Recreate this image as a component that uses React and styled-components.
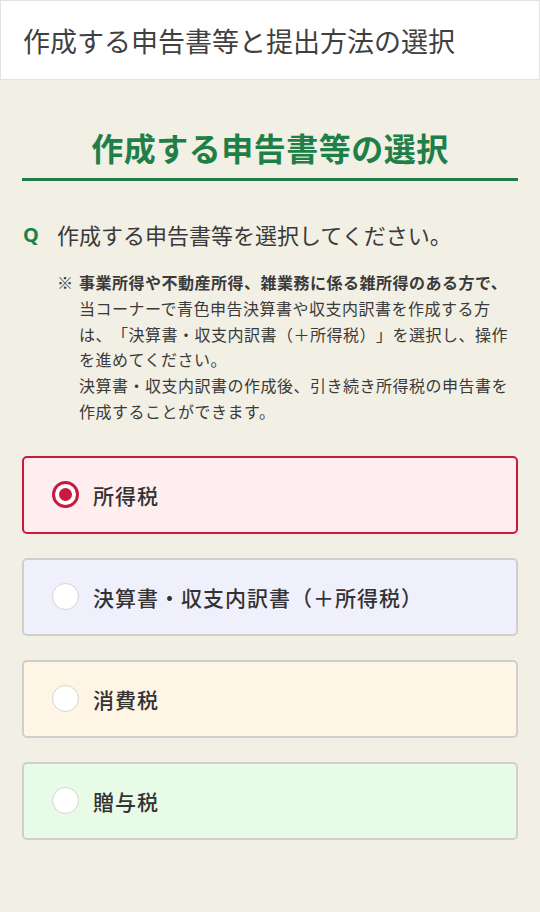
import React, { useState } from 'react';
import styled, { createGlobalStyle } from 'styled-components';

const GlobalStyle = createGlobalStyle`
  body {
    margin: 0;
    background: #f2efe4;
    font-family: "Noto Sans CJK JP", "Noto Sans", sans-serif;
    color: #333;
    text-spacing-trim: space-all;
  }
`;

const options = [
  { id: 'income', label: '所得税', bg: '#ffeeef' },
  { id: 'settlement', label: '決算書・収支内訳書（＋所得税）', bg: '#f0f0fd' },
  { id: 'consumption', label: '消費税', bg: '#fff5e5' },
  { id: 'gift', label: '贈与税', bg: '#e8fbe7' },
];

const App = () => {
  const [selected, setSelected] = useState('income');

  return (
    <Page>
      <GlobalStyle />
      <Header>
        <h1>作成する申告書等と提出方法の選択</h1>
      </Header>
      <Main>
        <SectionTitle>作成する申告書等の選択</SectionTitle>
        <Question>
          <span>Q</span>
          <p>作成する申告書等を選択してください。</p>
        </Question>
        <Note>
          <Mark>※</Mark>
          <div>
            <strong>事業所得や不動産所得、雑業務に係る雑所得のある方で、</strong>
            <br />
            当コーナーで青色申告決算書や収支内訳書を作成する方
            <br />
            は、「決算書・収支内訳書（＋所得税）」を選択し、操作
            <br />
            を進めてください。
            <br />
            決算書・収支内訳書の作成後、引き続き所得税の申告書を
            <br />
            作成することができます。
          </div>
        </Note>
        <Options>
          {options.map((o) => (
            <Option
              key={o.id}
              $bg={o.bg}
              $active={selected === o.id}
              onClick={() => setSelected(o.id)}
            >
              <Radio $active={selected === o.id} />
              <Label>{o.label}</Label>
            </Option>
          ))}
        </Options>
      </Main>
    </Page>
  );
};

export default App;

const Page = styled.div`
  min-height: 912px;
`;

const Header = styled.header`
  height: 78px;
  background: #fff;
  border: 1px solid #dfe3e6;
  display: flex;
  align-items: center;
  padding-left: 22px;
  h1 {
    margin: 0;
    font-size: 27px;
    font-weight: 400;
    color: #404040;
  }
`;

const Main = styled.main`
  padding: 0 22px;
`;

const SectionTitle = styled.h2`
  margin: 45px 0 0;
  padding-bottom: 9px;
  text-align: center;
  font-size: 32px;
  line-height: 44px;
  font-weight: 700;
  letter-spacing: 0.5px;
  color: #1f7f48;
  border-bottom: 3px solid #1f7f48;
`;

const Question = styled.div`
  display: flex;
  align-items: center;
  margin-top: 38px;
  span {
    width: 34px;
    padding-left: 1px;
    font-size: 20px;
    font-weight: 700;
    color: #1f7f48;
    font-family: "Noto Sans", sans-serif;
  }
  p {
    margin: 0;
    font-size: 22px;
    line-height: 30px;
    color: #3a3a3a;
  }
`;

const Note = styled.div`
  display: flex;
  margin: 21px 0 0 35px;
  font-size: 16px;
  letter-spacing: 0.5px;
  line-height: 25.8px;
  white-space: nowrap;
  color: #3a3a3a;
  strong {
    font-weight: 700;
  }
`;

const Mark = styled.span`
  flex: none;
  width: 22px;
`;

const Options = styled.div`
  display: flex;
  flex-direction: column;
  gap: 24px;
  margin-top: 31px;
`;

const Option = styled.label`
  display: flex;
  align-items: center;
  gap: 14px;
  height: 74px;
  padding-left: 28px;
  background: ${(p) => p.$bg};
  border: 2px solid ${(p) => (p.$active ? '#c9193f' : '#cfcfcf')};
  border-radius: 5px;
  cursor: pointer;
`;

const Label = styled.span`
  font-size: 21px;
  font-weight: 500;
  letter-spacing: 1px;
  color: #333;
`;

const Radio = styled.i`
  flex: none;
  box-sizing: border-box;
  width: 27px;
  height: 27px;
  border-radius: 50%;
  background: #fff;
  border: ${(p) => (p.$active ? '3px solid #c9193f' : '1px solid #d4d4d4')};
  display: flex;
  align-items: center;
  justify-content: center;
  &::after {
    content: '';
    display: ${(p) => (p.$active ? 'block' : 'none')};
    width: 13px;
    height: 13px;
    border-radius: 50%;
    background: #c9193f;
  }
`;
